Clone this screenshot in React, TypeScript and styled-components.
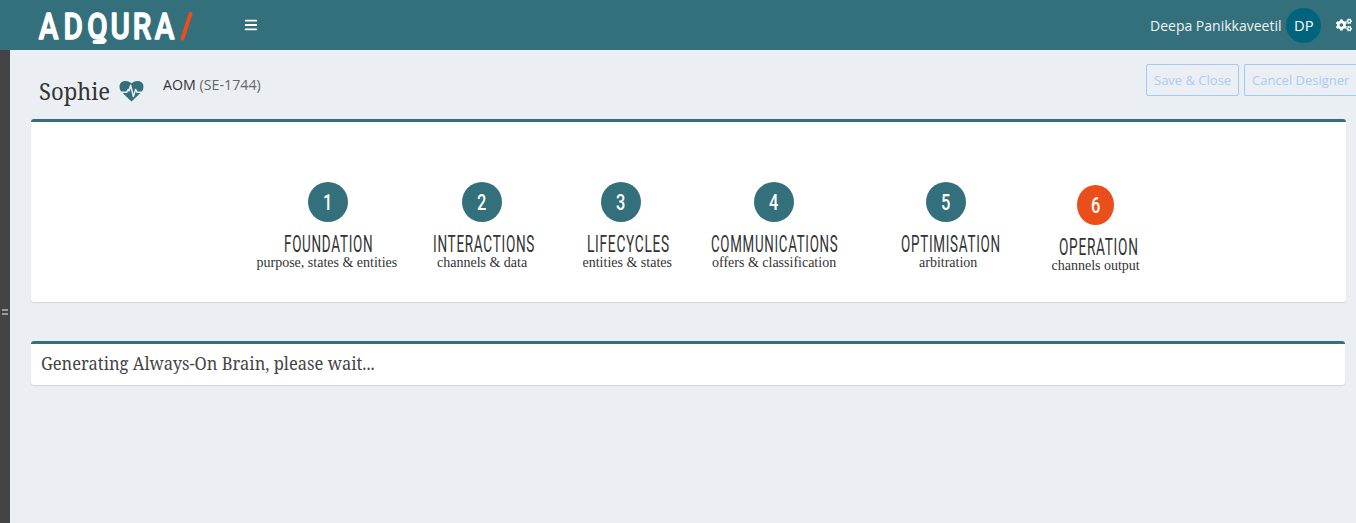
import React, { useLayoutEffect, useRef, useState } from 'react';
import styled, { createGlobalStyle } from 'styled-components';
import { FaBars, FaCogs } from 'react-icons/fa';

const TEAL = '#34707b';
const PAGE_BG = '#ebeff4';

const GlobalStyle = createGlobalStyle`
  * { box-sizing: border-box; }
  body { margin: 0; background: ${PAGE_BG}; overflow: hidden; color: #333; font-family: 'Open Sans', sans-serif; }
`;

const Page = styled.div`
  height: 523px;
  display: flex;
  flex-direction: column;
  overflow: hidden;
`;

const TopBar = styled.header`
  height: 50px;
  flex: none;
  display: flex;
  align-items: center;
  background: ${TEAL};
  color: #fff;
`;

const Logo = styled.svg`
  width: 170px;
  height: 50px;
  margin-left: 30px;
`;

const LogoText = styled.text`
  font: 500 37px Roboto, sans-serif;
  fill: #fff;
  stroke: #fff;
  stroke-width: 1.4px;
  stroke-linejoin: round;
`;

const MenuButton = styled.div`
  display: flex;
  margin-left: 44px;
  font-size: 14px;
`;

const Account = styled.div`
  margin-left: auto;
  display: flex;
  align-items: center;
  font-size: 14px;
  color: #eef3f4;
`;

const Avatar = styled.div`
  width: 35px;
  height: 35px;
  margin-left: 5px;
  border-radius: 50%;
  background: #00647c;
  color: #fff;
  display: grid;
  place-items: center;
`;

const Gears = styled.div`
  display: flex;
  margin-left: 15px;
  margin-right: 4px;
  font-size: 16px;
  color: #fff;
`;

const Body = styled.div`
  flex: 1;
  display: flex;
`;

const Splitter = styled.div`
  width: 10px;
  background: #444;
  display: flex;
  flex-direction: column;
  align-items: center;
  gap: 2px;
  padding-top: 259px;
`;

const Grip = styled.div`
  width: 6px;
  height: 2px;
  background: #999;
`;

const Main = styled.main`
  flex: 1;
  min-width: 0;
  padding-left: 21px;
`;

const Heading = styled.div`
  height: 69px;
  display: flex;
  align-items: flex-start;
  padding-left: 8px;
`;

const Name = styled.div`
  padding-top: 24px;
  font: 23px/34px 'Noto Serif', 'Liberation Serif', serif;
`;

const HeartIcon = styled.svg`
  width: 25px;
  height: 22px;
  margin-top: 30px;
  margin-left: 9px;
`;

const Model = styled.div`
  padding-top: 25px;
  margin-left: 19px;
  font-size: 14px;
  line-height: 20px;
`;

const Code = styled.span`
  color: #666;
`;

const Actions = styled.div`
  margin-left: auto;
  padding-top: 14px;
  display: flex;
  gap: 5px;
`;

const ActionButton = styled.button<{ $width: number; $cut?: boolean }>`
  width: ${p => p.$width}px;
  height: 32px;
  padding: 0 0 0 7px;
  display: flex;
  align-items: center;
  background: transparent;
  border: 1px solid #a4c8f7;
  border-right-width: ${p => (p.$cut ? 0 : 1)}px;
  border-radius: ${p => (p.$cut ? '2px 0 0 2px' : '2px')};
  color: #a9cbf6;
  font: 13px 'Open Sans', sans-serif;
`;

const Panel = styled.section<{ $width: number; $height: number }>`
  width: ${p => p.$width}px;
  height: ${p => p.$height}px;
  background: #fff;
  border-top: 3px solid ${TEAL};
  border-radius: 3px;
  box-shadow: 0 1px 1px rgba(0, 0, 0, 0.12);
`;

const Steps = styled(Panel)`
  display: flex;
  align-items: flex-start;
  padding: 60px 0 0 225px;
`;

const Step = styled.div<{ $width: number; $gap: number; $drop?: number }>`
  width: ${p => p.$width}px;
  margin-left: ${p => p.$gap}px;
  margin-top: ${p => p.$drop || 0}px;
`;

const Circle = styled.div<{ $indent: number; $active?: boolean }>`
  width: ${p => (p.$active ? 37 : 40)}px;
  height: 40px;
  margin-left: ${p => p.$indent}px;
  border-radius: 50%;
  background: ${p => (p.$active ? '#e94e1b' : TEAL)};
  color: #fff;
  display: grid;
  justify-items: center;
  font: 500 22.5px/40px Roboto, sans-serif;
`;

const StepTitle = styled.div<{ $indent: number }>`
  margin: 11px 0 0 ${p => p.$indent}px;
  height: 21px;
  font: 400 23px/24px Roboto, sans-serif;
  letter-spacing: 1.2px;
`;

const StepNote = styled.div<{ $indent: number }>`
  margin: 0 0 0 ${p => p.$indent}px;
  font: 14px/18px 'Liberation Serif', serif;
`;

const Status = styled(Panel)`
  margin-top: 39px;
  padding: 6px 0 0 10px;
  font: 17.5px/26px 'Noto Serif', 'Liberation Serif', serif;
  color: #444;
`;

const FitBox = styled.span<{ $width: number }>`
  display: block;
  width: ${p => p.$width}px;
  white-space: nowrap;
`;

const FitInner = styled.span`
  display: block;
  width: max-content;
  transform-origin: 0 50%;
`;

/* Squeezes a line of text horizontally to a fixed width. */
function Fit({ width, children }: { width: number; children: React.ReactNode }) {
  const ref = useRef<HTMLSpanElement>(null);
  const [scale, setScale] = useState(1);
  useLayoutEffect(() => {
    if (ref.current) setScale(width / ref.current.offsetWidth);
  }, [width]);
  return (
    <FitBox $width={width}>
      <FitInner ref={ref} style={{ transform: `scaleX(${scale})` }}>{children}</FitInner>
    </FitBox>
  );
}

const steps = [
  { title: 'FOUNDATION', note: 'purpose, states & entities', left: 256, circle: 308, t: [283.5, 89], n: [256.5, 141] },
  { title: 'INTERACTIONS', note: 'channels & data', left: 432, circle: 462, t: [432.5, 102], n: [437, 90] },
  { title: 'LIFECYCLES', note: 'entities & states', left: 582, circle: 601, t: [586.5, 83], n: [582.5, 89] },
  { title: 'COMMUNICATIONS', note: 'offers & classification', left: 711, circle: 754, t: [711, 127.5], n: [712, 124] },
  { title: 'OPTIMISATION', note: 'arbitration', left: 900, circle: 926, t: [900.5, 99.5], n: [919, 58] },
  { title: 'OPERATION', note: 'channels output', left: 1051, circle: 1077, t: [1058.5, 79.5], n: [1051.5, 88] },
];

const rightEdge = (s: (typeof steps)[number]) => Math.max(s.t[0] + s.t[1], s.n[0] + s.n[1]);

export default function App() {
  return (
    <Page>
      <GlobalStyle />
      <TopBar>
        <Logo viewBox="30 0 170 50">
          <g transform="scale(0.8 1)">
            <LogoText x="48.5 79.5 109 138 166 193.5" y="39.5">ADQURA</LogoText>
          </g>
          <path d="M94.5 42H102.5" stroke="#fff" strokeWidth="4" strokeLinecap="round" />
          <path d="M190.5 14L182.5 38.5" stroke="#e94e1b" strokeWidth="4" strokeLinecap="round" />
        </Logo>
        <MenuButton><FaBars /></MenuButton>
        <Account>
          <Fit width={131}>Deepa Panikkaveetil</Fit>
          <Avatar><Fit width={20}>DP</Fit></Avatar>
          <Gears><FaCogs /></Gears>
        </Account>
      </TopBar>
      <Body>
        <Splitter><Grip /><Grip /></Splitter>
        <Main>
          <Heading>
            <Name><Fit width={71}>Sophie</Fit></Name>
            <HeartIcon viewBox="0 0 25 22">
              <path
                d="M12.5 21.5L2.5 12C-1 8 0 1 6.5 1C9.5 1 11.2 2.2 12.5 3.4C13.8 2.2 15.5 1 18.5 1C25 1 26 8 22.5 12Z"
                fill={TEAL}
              />
              <path
                d="M0 12.3H7.6L9.2 9.5L10 11L11.6 5.2L14.4 16.6L16.6 9.4L18 12.3H25"
                fill="none"
                stroke={PAGE_BG}
                strokeWidth="1.5"
                strokeLinejoin="round"
              />
            </HeartIcon>
            <Model><Fit width={97.5}>AOM <Code>(SE-1744)</Code></Fit></Model>
            <Actions>
              <ActionButton $width={93}><Fit width={77}>Save &amp; Close</Fit></ActionButton>
              <ActionButton $width={112} $cut><Fit width={97}>Cancel Designer</Fit></ActionButton>
            </Actions>
          </Heading>
          <Steps $width={1315} $height={183}>
            {steps.map((s, i) => (
              <Step
                key={s.title}
                $width={rightEdge(s) - s.left}
                $gap={i ? s.left - rightEdge(steps[i - 1]) : 0}
                $drop={i === 5 ? 3 : 0}
              >
                <Circle $indent={s.circle - s.left} $active={i === 5}><Fit width={9.5}>{i + 1}</Fit></Circle>
                <StepTitle $indent={s.t[0] - s.left}><Fit width={s.t[1]}>{s.title}</Fit></StepTitle>
                <StepNote $indent={s.n[0] - s.left}><Fit width={s.n[1]}>{s.note}</Fit></StepNote>
              </Step>
            ))}
          </Steps>
          <Status $width={1314} $height={44}>
            <Fit width={334}>Generating Always-On Brain, please wait...</Fit>
          </Status>
        </Main>
      </Body>
    </Page>
  );
}
